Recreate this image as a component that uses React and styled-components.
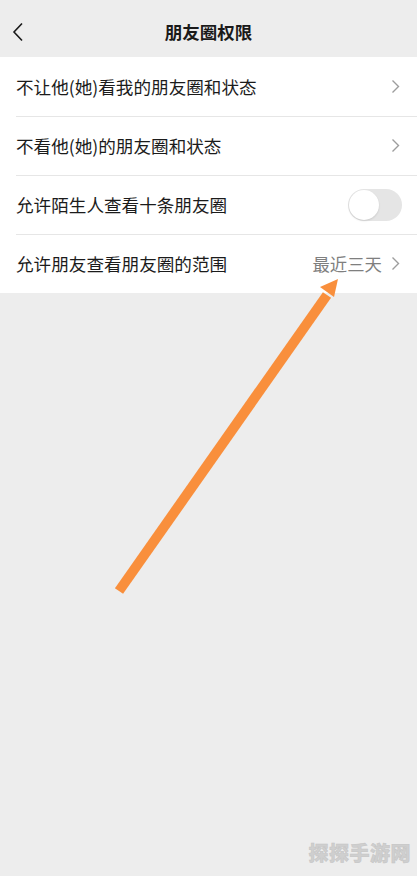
import React from "react";
import styled, { createGlobalStyle } from "styled-components";

const Global = createGlobalStyle`
  html, body { margin: 0; padding: 0; background: #ededed; }
  body { font-family: "Noto Sans CJK SC", "Noto Sans", sans-serif; }
`;

const Page = styled.div`
  position: relative;
  width: 417px;
  height: 876px;
  background: #ededed;
  overflow: hidden;
`;

const NavBar = styled.div`
  height: 57px;
  display: flex;
  align-items: center;
  justify-content: center;
  position: relative;
`;

const BackButton = styled.div`
  position: absolute;
  left: 12px;
  top: 22px;
  width: 20px;
  height: 22px;
  display: flex;
`;

const Title = styled.div`
  font-size: 17.5px;
  font-weight: 700;
  color: #1a1a1a;
  margin-top: 5px;
`;

const List = styled.div`
  background: #fff;
`;

const Row = styled.div`
  height: 59px;
  display: flex;
  align-items: center;
  padding: 0 17px 0 16px;
  position: relative;
  & + &::before {
    content: "";
    position: absolute;
    top: 0;
    left: 16px;
    right: 0;
    height: 1px;
    background: #e6e6e6;
  }
`;

const Label = styled.div`
  flex: 1;
  font-size: 17.6px;
  color: #1b1b1b;
`;

const Value = styled.div`
  font-size: 17.4px;
  color: #7f7f7f;
  margin-right: 9px;
`;

const Toggle = styled.div`
  width: 54px;
  height: 32px;
  border-radius: 16px;
  background: #e5e5e5;
  position: relative;
  margin-right: -2px;
  &::after {
    content: "";
    position: absolute;
    left: 1px;
    top: 1px;
    width: 30px;
    height: 30px;
    border-radius: 50%;
    background: #fff;
    box-shadow: 0 1px 2px rgba(0,0,0,0.12);
  }
`;

const Overlay = styled.svg`
  position: absolute;
  left: 0;
  top: 0;
  pointer-events: none;
`;

const Watermark = styled.div`
  position: absolute;
  right: 6px;
  bottom: 9px;
  font-size: 20px;
  font-weight: 900;
  color: #cfcfcf;
  letter-spacing: 0.5px;
  -webkit-text-stroke: 0.5px #c4c4c4;
`;

const Chevron = () => (
  <svg width="9" height="15" viewBox="0 0 9 15">
    <path d="M1.5 1.5 L7.5 7.5 L1.5 13.5" fill="none" stroke="#9d9d9d" strokeWidth="1.4" />
  </svg>
);

export default function App() {
  return (
    <Page>
      <Global />
      <NavBar>
        <BackButton>
          <svg width="12" height="20" viewBox="0 0 12 20">
            <path d="M10 1.5 L2 10 L10 18.5" fill="none" stroke="#1a1a1a" strokeWidth="1.6" />
          </svg>
        </BackButton>
        <Title>朋友圈权限</Title>
      </NavBar>
      <List>
        <Row>
          <Label>不让他(她)看我的朋友圈和状态</Label>
          <Chevron />
        </Row>
        <Row>
          <Label>不看他(她)的朋友圈和状态</Label>
          <Chevron />
        </Row>
        <Row>
          <Label>允许陌生人查看十条朋友圈</Label>
          <Toggle />
        </Row>
        <Row>
          <Label>允许朋友查看朋友圈的范围</Label>
          <Value>最近三天</Value>
          <Chevron />
        </Row>
      </List>
      <Overlay width="417" height="876" viewBox="0 0 417 876">
        <line x1="119" y1="591" x2="327" y2="295" stroke="#f98f3c" strokeWidth="10" />
        <polygon points="338,279 320,287 334,297" fill="#f98f3c" />
      </Overlay>
      <Watermark>探探手游网</Watermark>
    </Page>
  );
}
